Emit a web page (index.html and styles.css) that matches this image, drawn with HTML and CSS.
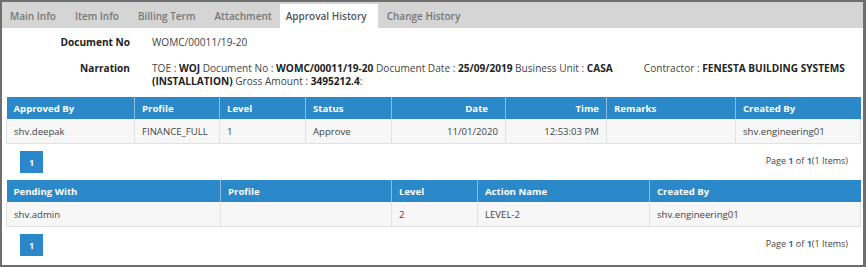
FILE: index.html
```html
<!DOCTYPE html>
<html lang="en">
<head>
    <meta charset="UTF-8">
    <title>Approval History</title>
    <link rel="stylesheet" href="styles.css">
</head>
<body>
    <div class="frame">
        <ul class="tabs">
            <li>Main Info</li>
            <li>Item Info</li>
            <li>Billing Term</li>
            <li>Attachment</li>
            <li class="active">Approval History</li>
            <li>Change History</li>
        </ul>
        <div class="panel">
            <table class="fields">
                <tr class="doc-row">
                    <th>Document No</th>
                    <td>WOMC/00011/19-20</td>
                </tr>
                <tr class="narr-row">
                    <th>Narration</th>
                    <td>TOE : <b>WOJ</b> Document No : <b>WOMC/00011/19-20</b> Document Date : <b>25/09/2019</b> Business Unit : <b>CASA</b><span class="gap"></span>Contractor : <b>FENESTA BUILDING SYSTEMS (INSTALLATION)</b> Gross Amount : <b>3495212.4</b>:</td>
                </tr>
            </table>

            <table class="grid">
                <colgroup>
                    <col style="width:128px"><col style="width:85px"><col style="width:86px"><col style="width:86px">
                    <col style="width:114px"><col style="width:101px"><col style="width:129px"><col>
                </colgroup>
                <thead>
                    <tr>
                        <th>Approved By</th>
                        <th>Profile</th>
                        <th>Level</th>
                        <th>Status</th>
                        <th class="num sortable">Date</th>
                        <th class="num">Time</th>
                        <th>Remarks</th>
                        <th>Created By</th>
                    </tr>
                </thead>
                <tbody>
                    <tr>
                        <td>shv.deepak</td>
                        <td>FINANCE_FULL</td>
                        <td>1</td>
                        <td>Approve</td>
                        <td class="num">11/01/2020</td>
                        <td class="num">12:53:03 PM</td>
                        <td></td>
                        <td>shv.engineering01</td>
                    </tr>
                </tbody>
            </table>
            <div class="pager">
                <button class="page-btn">1</button>
                <span class="page-info">Page <a>1</a> of <a>1</a>(1 Items)</span>
            </div>

            <table class="grid">
                <colgroup>
                    <col style="width:214px"><col style="width:171px"><col style="width:86px"><col style="width:172px"><col>
                </colgroup>
                <thead>
                    <tr>
                        <th>Pending With</th>
                        <th>Profile</th>
                        <th>Level</th>
                        <th>Action Name</th>
                        <th>Created By</th>
                    </tr>
                </thead>
                <tbody>
                    <tr>
                        <td>shv.admin</td>
                        <td></td>
                        <td>2</td>
                        <td>LEVEL-2</td>
                        <td>shv.engineering01</td>
                    </tr>
                </tbody>
            </table>
            <div class="pager">
                <button class="page-btn">1</button>
                <span class="page-info">Page <a>1</a> of <a>1</a>(1 Items)</span>
            </div>
        </div>
    </div>
</body>
</html>
```

FILE: styles.css
```css
body {
    margin: 0;
    font-family: 'Open Sans', Arial, sans-serif;
    font-size: 10px;
    color: #444;
    background: #fff;
}
.frame {
    width: 866px;
    height: 267px;
    box-sizing: border-box;
    border: 2px solid #6e6e6e;
    border-right-width: 3px;
    overflow: hidden;
}
.tabs {
    list-style: none;
    margin: 0;
    padding: 2px 0 0 0;
    height: 26px;
    box-sizing: border-box;
    background: #d5d5d5;
    display: flex;
    align-items: flex-end;
}
.tabs li {
    height: 24px;
    line-height: 24px;
    padding: 0 11px 0 8px;
    color: #777;
    font-weight: 600;
}
.tabs li.active {
    background: #fff;
    color: #555;
    padding: 0 11px 0 6px;
    margin: 0 1px 0 -3px;
}
.panel {
    padding: 0 2px 0 4px;
}
.fields {
    width: 100%;
    border-collapse: collapse;
    margin-top: 8px;
    margin-bottom: 9px;
    font-size: 10.1px;
}
.fields th {
    width: 124px;
    text-align: right;
    color: #222;
    font-weight: 700;
    vertical-align: top;
    padding: 0 22px 0 0;
    white-space: nowrap;
}
.fields td {
    color: #444;
    line-height: 13px;
    padding: 0;
}
.fields b {
    color: #222;
}
.doc-row th, .doc-row td {
    padding-top: 0;
    padding-bottom: 13px;
    line-height: 13px;
}
.narr-row th {
    line-height: 13px;
}
.gap {
    display: inline-block;
    width: 31px;
}
.grid {
    width: 855px;
    border-collapse: collapse;
    table-layout: fixed;
    font-size: 9.6px;
}
.grid th {
    background: #2b88c9;
    color: #fff;
    font-weight: 700;
    text-align: left;
    height: 22px;
    padding: 0 6px 0 7px;
    border-left: 1px solid #8fbde0;
}
.grid th:first-child {
    border-left: none;
}
.grid td {
    background: #f7f7f7;
    height: 24px;
    padding: 0 6px 0 7px;
    border: 1px solid #e2e2e2;
    border-top: none;
    color: #444;
}
.grid .num {
    text-align: right;
    padding-right: 7px;
}
.grid th.sortable {
    padding-right: 17px;
}
.pager {
    display: flex;
    justify-content: space-between;
    align-items: center;
    padding: 7px 13px 7px 14px;
    height: 36px;
    box-sizing: border-box;
}
.page-btn {
    width: 23px;
    height: 22px;
    border: none;
    background: #2a87c9;
    color: #fff;
    font-family: inherit;
    font-size: 9px;
    font-weight: 700;
    padding: 0;
}
.page-info {
    font-size: 9px;
    color: #444;
    margin-top: -4px;
}
.page-info a {
    color: #1a78c2;
    font-weight: 700;
}
```
